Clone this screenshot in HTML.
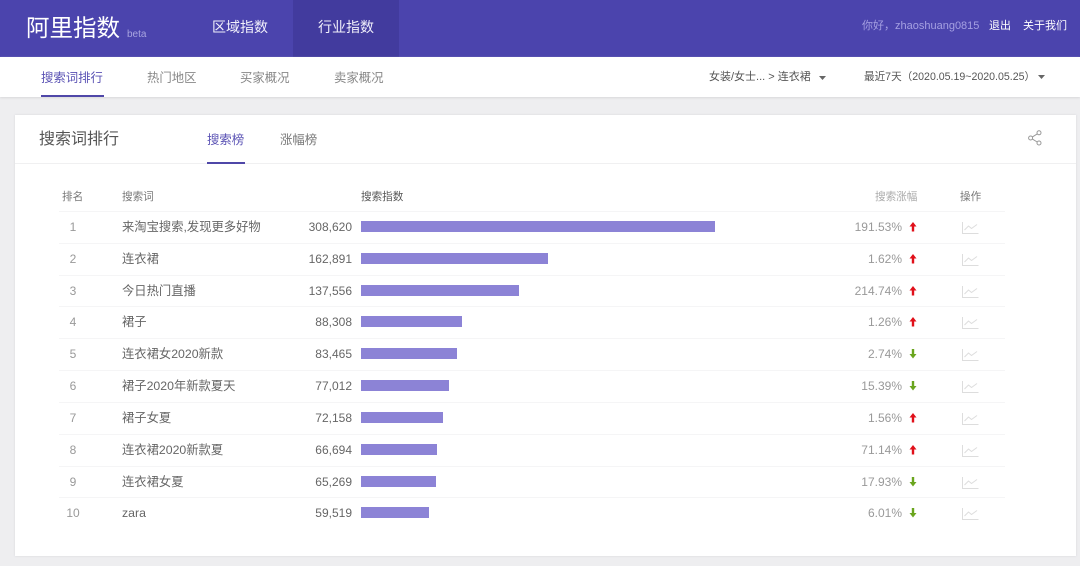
<!DOCTYPE html>
<html lang="zh"><head><meta charset="utf-8"><title>阿里指数</title>
<style>
*{box-sizing:border-box;margin:0;padding:0}
html,body{width:1080px;height:566px;overflow:hidden;background:#eeeef0;font-family:"Liberation Sans","Noto Sans CJK SC",sans-serif}
#w{position:absolute;left:0;top:0;width:1080px;height:566px;filter:blur(.35px)}
.a{position:absolute;white-space:nowrap;line-height:1}
#hd{position:absolute;left:0;top:0;width:1080px;height:57px;background:#4b44ad}
#act{position:absolute;left:293px;top:0;width:106px;height:57px;background:#423b9e}
#nav{position:absolute;left:0;top:57px;width:1080px;height:40px;background:#fff;box-shadow:0 1px 2px #d8d8da}
#card{position:absolute;left:15px;top:115px;width:1061px;height:441px;background:#fff;box-shadow:0 0 2px #d5d5d8}
.row{position:absolute;left:0;width:1080px;height:32px}
.row i{position:absolute;font-style:normal;line-height:1;white-space:nowrap;top:10px}
.rk{left:59px;width:28px;text-align:center;font-size:12px;color:#999}
.kw{left:122px;font-size:12.3px;color:#666}
.num{left:280px;width:72px;text-align:right;font-size:12px;color:#666}
.bar{position:absolute;left:361px;top:10px;height:11px;background:#8c83d6}
.pct{left:820px;width:82px;text-align:right;font-size:12px;color:#999}
.ln{position:absolute;left:59px;top:0;width:946px;height:1px;background:#f5f5f6}
svg{position:absolute;overflow:visible}
.arr{left:909px;top:11px}
.ch{left:962px;top:11px}
</style></head><body><div id="w">
<div id="hd"></div><div id="act"></div>
<div class="a" style="left:26px;top:17px;font-size:23.5px;color:#fff">阿里指数</div>
<div class="a" style="left:127px;top:30px;font-size:10px;color:#a9a5e0">beta</div>
<div class="a" style="left:212px;top:20px;font-size:14px;color:#f1f0fb">区域指数</div>
<div class="a" style="left:318px;top:20px;font-size:14px;color:#f1f0fb">行业指数</div>
<div class="a" style="left:862px;top:21px;font-size:11px;color:#a5a0e2">你好，zhaoshuang0815</div>
<div class="a" style="left:989px;top:21px;font-size:11px;color:#fff">退出</div>
<div class="a" style="left:1023px;top:21px;font-size:11px;color:#fff">关于我们</div>

<div id="nav"></div>
<div class="a" style="left:41px;top:72px;font-size:12.4px;color:#5a52b4">搜索词排行</div>
<div style="position:absolute;left:41px;top:95px;width:63px;height:2px;background:#4f47a8"></div>
<div class="a" style="left:147px;top:72px;font-size:12.4px;color:#888">热门地区</div>
<div class="a" style="left:240px;top:72px;font-size:12.4px;color:#888">买家概况</div>
<div class="a" style="left:334px;top:72px;font-size:12.4px;color:#888">卖家概况</div>
<div class="a" style="left:709px;top:72px;font-size:11px;color:#555">女装/女士... &gt; 连衣裙</div>
<svg style="left:819px;top:76px" width="8" height="5"><path d="M0 0H7L3.5 4Z" fill="#666"/></svg>
<div class="a" style="left:864px;top:72px;font-size:10.6px;color:#555">最近7天（2020.05.19~2020.05.25）</div>
<svg style="left:1038px;top:75px" width="8" height="5"><path d="M0 0H7L3.5 4Z" fill="#666"/></svg>

<div id="card"></div>
<div class="a" style="left:39px;top:132px;font-size:16px;color:#555">搜索词排行</div>
<div class="a" style="left:207px;top:134px;font-size:12.4px;color:#5a52b4">搜索榜</div>
<div class="a" style="left:280px;top:134px;font-size:12.4px;color:#777">涨幅榜</div>
<div style="position:absolute;left:15px;top:163px;width:1061px;height:1px;background:#f0f0f1"></div>
<div style="position:absolute;left:207px;top:162px;width:38px;height:2px;background:#4f47a8"></div>
<svg style="left:1028px;top:130px" width="14" height="16" fill="none" stroke="#999" stroke-width="1"><circle cx="11" cy="2.800" r="2"/><circle cx="2.600" cy="8" r="2"/><circle cx="11" cy="13" r="2"/><path d="M9.200 3.900 4.400 6.900M4.400 9.100 9.200 12"/></svg>

<div class="a" style="left:62px;top:192px;font-size:10.6px;color:#777">排名</div>
<div class="a" style="left:122px;top:192px;font-size:10.6px;color:#777">搜索词</div>
<div class="a" style="left:361px;top:192px;font-size:10.6px;color:#555">搜索指数</div>
<div class="a" style="left:875px;top:192px;font-size:10.6px;color:#aaa">搜索涨幅</div>
<div class="a" style="left:960px;top:192px;font-size:10.6px;color:#777">操作</div>

<div class="row" style="top:211px"><div class="ln"></div><i class="rk">1</i><i class="kw">来淘宝搜索,发现更多好物</i><i class="num">308,620</i><div class="bar" style="width:354px"></div><i class="pct">191.53%</i>
<svg class="arr" width="8" height="10"><path d="M4 0 7.500 4.500H5.200V9.500H2.800V4.500H.5Z" fill="#e0101a"/></svg>
<svg class="ch" width="17" height="12" fill="none" stroke="#ddd"><path d="M.5 0V11.500H16.500M2.500 8 6.500 4 9.500 6.500 15 2.500"/></svg></div>
<div class="row" style="top:243px"><div class="ln"></div><i class="rk">2</i><i class="kw">连衣裙</i><i class="num">162,891</i><div class="bar" style="width:187px"></div><i class="pct">1.62%</i>
<svg class="arr" width="8" height="10"><path d="M4 0 7.500 4.500H5.200V9.500H2.800V4.500H.5Z" fill="#e0101a"/></svg>
<svg class="ch" width="17" height="12" fill="none" stroke="#ddd"><path d="M.5 0V11.500H16.500M2.500 8 6.500 4 9.500 6.500 15 2.500"/></svg></div>
<div class="row" style="top:275px"><div class="ln"></div><i class="rk">3</i><i class="kw">今日热门直播</i><i class="num">137,556</i><div class="bar" style="width:158px"></div><i class="pct">214.74%</i>
<svg class="arr" width="8" height="10"><path d="M4 0 7.500 4.500H5.200V9.500H2.800V4.500H.5Z" fill="#e0101a"/></svg>
<svg class="ch" width="17" height="12" fill="none" stroke="#ddd"><path d="M.5 0V11.500H16.500M2.500 8 6.500 4 9.500 6.500 15 2.500"/></svg></div>
<div class="row" style="top:306px"><div class="ln"></div><i class="rk">4</i><i class="kw">裙子</i><i class="num">88,308</i><div class="bar" style="width:101px"></div><i class="pct">1.26%</i>
<svg class="arr" width="8" height="10"><path d="M4 0 7.500 4.500H5.200V9.500H2.800V4.500H.5Z" fill="#e0101a"/></svg>
<svg class="ch" width="17" height="12" fill="none" stroke="#ddd"><path d="M.5 0V11.500H16.500M2.500 8 6.500 4 9.500 6.500 15 2.500"/></svg></div>
<div class="row" style="top:338px"><div class="ln"></div><i class="rk">5</i><i class="kw">连衣裙女2020新款</i><i class="num">83,465</i><div class="bar" style="width:96px"></div><i class="pct">2.74%</i>
<svg class="arr" width="8" height="10"><path d="M2.800 0H5.200V5H7.500L4 9.500 .5 5H2.800Z" fill="#6aa51e"/></svg>
<svg class="ch" width="17" height="12" fill="none" stroke="#ddd"><path d="M.5 0V11.500H16.500M2.500 8 6.500 4 9.500 6.500 15 2.500"/></svg></div>
<div class="row" style="top:370px"><div class="ln"></div><i class="rk">6</i><i class="kw">裙子2020年新款夏天</i><i class="num">77,012</i><div class="bar" style="width:88px"></div><i class="pct">15.39%</i>
<svg class="arr" width="8" height="10"><path d="M2.800 0H5.200V5H7.500L4 9.500 .5 5H2.800Z" fill="#6aa51e"/></svg>
<svg class="ch" width="17" height="12" fill="none" stroke="#ddd"><path d="M.5 0V11.500H16.500M2.500 8 6.500 4 9.500 6.500 15 2.500"/></svg></div>
<div class="row" style="top:402px"><div class="ln"></div><i class="rk">7</i><i class="kw">裙子女夏</i><i class="num">72,158</i><div class="bar" style="width:82px"></div><i class="pct">1.56%</i>
<svg class="arr" width="8" height="10"><path d="M4 0 7.500 4.500H5.200V9.500H2.800V4.500H.5Z" fill="#e0101a"/></svg>
<svg class="ch" width="17" height="12" fill="none" stroke="#ddd"><path d="M.5 0V11.500H16.500M2.500 8 6.500 4 9.500 6.500 15 2.500"/></svg></div>
<div class="row" style="top:434px"><div class="ln"></div><i class="rk">8</i><i class="kw">连衣裙2020新款夏</i><i class="num">66,694</i><div class="bar" style="width:76px"></div><i class="pct">71.14%</i>
<svg class="arr" width="8" height="10"><path d="M4 0 7.500 4.500H5.200V9.500H2.800V4.500H.5Z" fill="#e0101a"/></svg>
<svg class="ch" width="17" height="12" fill="none" stroke="#ddd"><path d="M.5 0V11.500H16.500M2.500 8 6.500 4 9.500 6.500 15 2.500"/></svg></div>
<div class="row" style="top:466px"><div class="ln"></div><i class="rk">9</i><i class="kw">连衣裙女夏</i><i class="num">65,269</i><div class="bar" style="width:75px"></div><i class="pct">17.93%</i>
<svg class="arr" width="8" height="10"><path d="M2.800 0H5.200V5H7.500L4 9.500 .5 5H2.800Z" fill="#6aa51e"/></svg>
<svg class="ch" width="17" height="12" fill="none" stroke="#ddd"><path d="M.5 0V11.500H16.500M2.500 8 6.500 4 9.500 6.500 15 2.500"/></svg></div>
<div class="row" style="top:497px"><div class="ln"></div><i class="rk">10</i><i class="kw">zara</i><i class="num">59,519</i><div class="bar" style="width:68px"></div><i class="pct">6.01%</i>
<svg class="arr" width="8" height="10"><path d="M2.800 0H5.200V5H7.500L4 9.500 .5 5H2.800Z" fill="#6aa51e"/></svg>
<svg class="ch" width="17" height="12" fill="none" stroke="#ddd"><path d="M.5 0V11.500H16.500M2.500 8 6.500 4 9.500 6.500 15 2.500"/></svg></div>
</div></body></html>
